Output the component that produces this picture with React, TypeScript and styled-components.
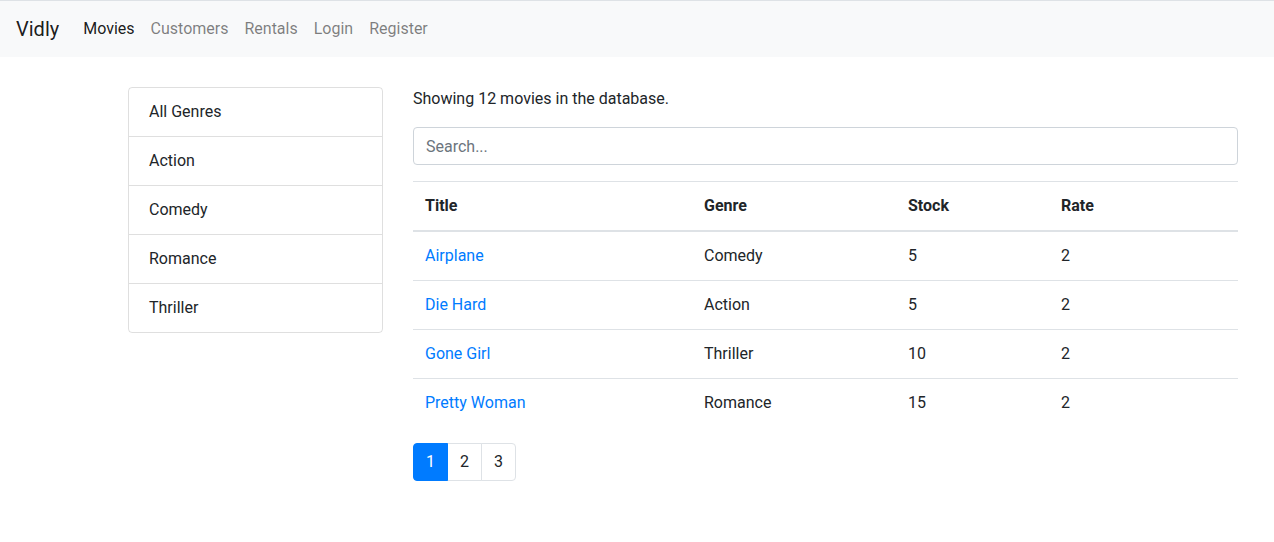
import React, { useState } from "react";
import styled, { createGlobalStyle } from "styled-components";

const GlobalStyle = createGlobalStyle`
  * { box-sizing: border-box; }
  body {
    margin: 0;
    font-family: Roboto, "Noto Sans", "Liberation Sans", sans-serif;
    font-size: 16px;
    line-height: 1.5;
    color: #212529;
    background: #fff;
  }
`;

const Navbar = styled.nav`
  display: flex;
  align-items: center;
  height: 57px;
  padding: 8px 16px;
  background: #f8f9fa;
  border-top: 1px solid #dee2e6;
`;

const Brand = styled.a`
  font-size: 20px;
  line-height: 30px;
  color: rgba(0, 0, 0, 0.9);
  margin-right: 16px;
  text-decoration: none;
`;

const NavLink = styled.a<{ $active?: boolean }>`
  padding: 8px;
  color: ${(p) => (p.$active ? "rgba(0,0,0,.9)" : "rgba(0,0,0,.5)")};
  text-decoration: none;
`;

const Container = styled.main`
  width: 1140px;
  margin-left: 113px;
  margin-top: 30px;
  display: grid;
  grid-template-columns: 285px 855px;
`;

const Col = styled.div`
  padding: 0 15px;
`;

const ListGroup = styled.ul`
  list-style: none;
  margin: 0;
  padding: 0;
  border: 1px solid rgba(0, 0, 0, 0.125);
  border-radius: 4px;
`;

const ListItem = styled.li`
  padding: 12px 20px;
  border-top: 1px solid rgba(0, 0, 0, 0.125);
  &:first-child { border-top: none; }
  line-height: 24px;
`;

const Info = styled.p`
  margin: 0 0 16px;
`;

const SearchInput = styled.input`
  display: block;
  width: 100%;
  height: 38px;
  padding: 6px 12px;
  font: inherit;
  color: #495057;
  border: 1px solid #ced4da;
  border-radius: 4px;
  margin-bottom: 16px;
  &::placeholder { color: #6c757d; }
`;

const Table = styled.table`
  width: 100%;
  border-collapse: collapse;
  margin-bottom: 16px;
`;

const Th = styled.th<{ $w: number }>`
  width: ${(p) => p.$w}px;
  text-align: left;
  padding: 12px;
  border-top: 1px solid #dee2e6;
  border-bottom: 2px solid #dee2e6;
  font-weight: 700;
`;

const Td = styled.td`
  padding: 12px;
  border-top: 1px solid #dee2e6;
`;

const TitleLink = styled.a`
  color: #007bff;
  text-decoration: none;
`;

const Pagination = styled.ul`
  display: flex;
  list-style: none;
  margin: 0;
  padding: 0;
`;

const PageLink = styled.a<{ $active?: boolean }>`
  display: block;
  padding: 8px 12px;
  line-height: 20px;
  margin-left: -1px;
  border: 1px solid ${(p) => (p.$active ? "#007bff" : "#dee2e6")};
  background: ${(p) => (p.$active ? "#007bff" : "#fff")};
  color: ${(p) => (p.$active ? "#fff" : "#212529")};
  text-decoration: none;
  position: relative;
  z-index: ${(p) => (p.$active ? 1 : 0)};
  li:first-child & { margin-left: 0; border-radius: 4px 0 0 4px; }
  li:last-child & { border-radius: 0 4px 4px 0; }
`;

const genres = ["All Genres", "Action", "Comedy", "Romance", "Thriller"];
const movies = [
  { title: "Airplane", genre: "Comedy", stock: 5, rate: 2 },
  { title: "Die Hard", genre: "Action", stock: 5, rate: 2 },
  { title: "Gone Girl", genre: "Thriller", stock: 10, rate: 2 },
  { title: "Pretty Woman", genre: "Romance", stock: 15, rate: 2 },
];

export default function App() {
  const [query, setQuery] = useState("");
  return (
    <>
      <GlobalStyle />
      <Navbar>
        <Brand href="#">Vidly</Brand>
        <NavLink $active href="#">Movies</NavLink>
        <NavLink href="#">Customers</NavLink>
        <NavLink href="#">Rentals</NavLink>
        <NavLink href="#">Login</NavLink>
        <NavLink href="#">Register</NavLink>
      </Navbar>
      <Container>
        <Col>
          <ListGroup>
            {genres.map((g) => (
              <ListItem key={g}>{g}</ListItem>
            ))}
          </ListGroup>
        </Col>
        <Col>
          <Info>Showing 12 movies in the database.</Info>
          <SearchInput
            placeholder="Search..."
            value={query}
            onChange={(e) => setQuery(e.target.value)}
          />
          <Table>
            <thead>
              <tr>
                <Th $w={279}>Title</Th>
                <Th $w={204}>Genre</Th>
                <Th $w={153}>Stock</Th>
                <Th $w={189}>Rate</Th>
              </tr>
            </thead>
            <tbody>
              {movies.map((m) => (
                <tr key={m.title}>
                  <Td><TitleLink href="#">{m.title}</TitleLink></Td>
                  <Td>{m.genre}</Td>
                  <Td>{m.stock}</Td>
                  <Td>{m.rate}</Td>
                </tr>
              ))}
            </tbody>
          </Table>
          <Pagination>
            {[1, 2, 3].map((n) => (
              <li key={n}>
                <PageLink $active={n === 1} href="#">{n}</PageLink>
              </li>
            ))}
          </Pagination>
        </Col>
      </Container>
    </>
  );
}
